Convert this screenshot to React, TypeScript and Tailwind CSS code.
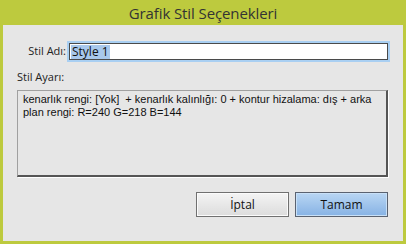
export default function App() {
  return (
    <div className="w-[406px] h-[244px] bg-[#bdca3e] flex flex-col font-['Segoe_UI','Open_Sans','Noto_Sans',sans-serif]">
      <div className="h-[25px] flex items-center justify-center text-[15px] tracking-[-0.1px] text-[#333] pt-[1px]">
        Grafik Stil Seçenekleri
      </div>
      <div className="mx-[3px] mb-[3px] flex-1 bg-[#e6e6e6] flex flex-col pl-[14px] pr-[15px]">
        <div className="flex items-center mt-[18px] h-[17px]">
          <div className="w-[52px] text-right text-[11px] text-[#222] pr-[3px]">Stil Adı:</div>
          <div className="flex-1 h-[17px] border border-[#4a4a4a] bg-white shadow-[0_0_0_2px_#a9cff2] flex items-center pl-[1px]">
            <span className="bg-[#a8c8ec] text-[12px] text-[#111] leading-[14px] px-[1px]">Style 1</span>
          </div>
        </div>
        <div className="mt-[10px] text-[11px] text-[#222] leading-[14px]">Stil Ayarı:</div>
        <div className="mt-[6px] h-[87px] border-t border-l border-[#a0a0a0] shadow-[1px_1px_0_0_#ffffff] border-r-2 border-b-2 border-r-[#555] border-b-[#555] px-[5px] pt-[2px] font-['Liberation_Sans',Arial,sans-serif] text-[11px] leading-[13px] text-[#111] whitespace-nowrap">
          <div>kenarlık rengi: [Yok]&nbsp; + kenarlık kalınlığı: 0 + kontur hizalama: dış + arka</div>
          <div>plan rengi: R=240 G=218 B=144</div>
        </div>
        <div className="mt-[15px] flex justify-end gap-[6px]">
          <button className="w-[93px] h-[25px] border border-[#707070] bg-gradient-to-b from-[#f4f4f4] to-[#dcdcdc] shadow-[inset_0_0_0_1px_#fbfbfb] text-[12px] text-[#111]">İptal</button>
          <button className="w-[93px] h-[25px] border border-[#5a6270] bg-gradient-to-b from-[#b9d6f3] to-[#86b2e4] shadow-[inset_0_0_0_1px_#c8e0f7] text-[12px] text-[#111]">Tamam</button>
        </div>
      </div>
    </div>
  );
}
